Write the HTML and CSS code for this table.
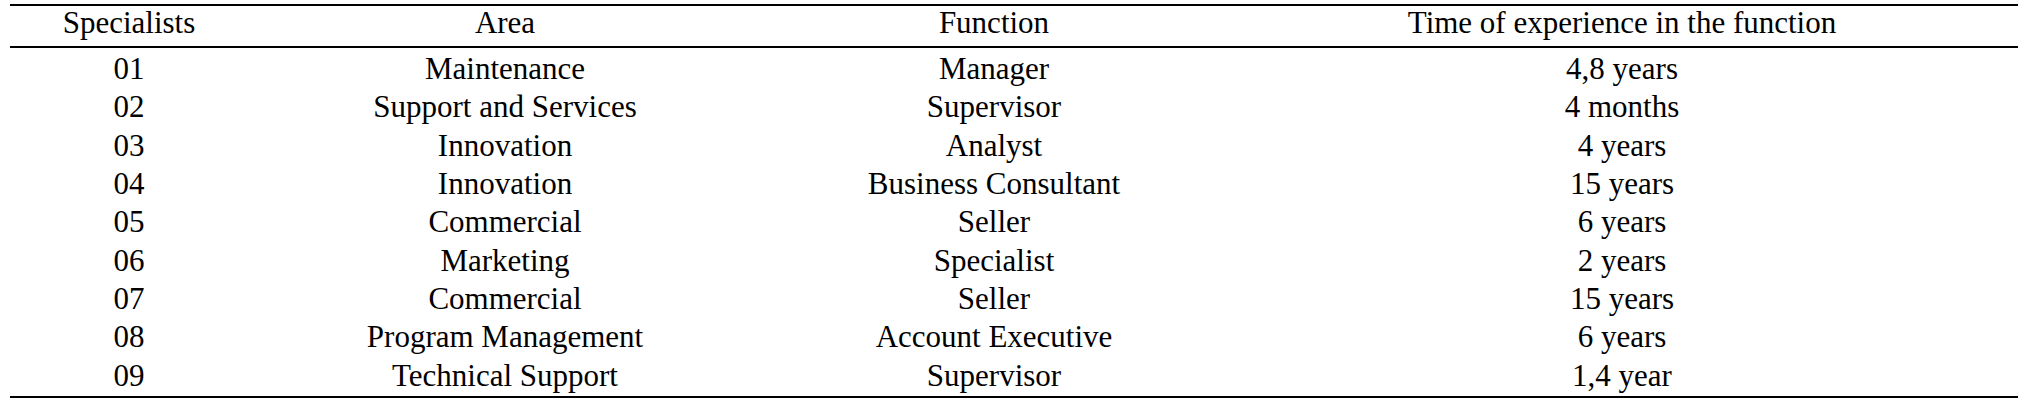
FILE: index.html
```html
<!DOCTYPE html>
<html>
<head>
<meta charset="utf-8">
<link rel="stylesheet" href="styles.css">
</head>
<body>
<table class="spec-table">
  <colgroup>
    <col class="c1"><col class="c2"><col class="c3"><col class="c4">
  </colgroup>
  <thead>
    <tr><th>Specialists</th><th>Area</th><th>Function</th><th>Time of experience in the function</th></tr>
  </thead>
  <tbody>
    <tr><td>01</td><td>Maintenance</td><td>Manager</td><td>4,8 years</td></tr>
    <tr><td>02</td><td>Support and Services</td><td>Supervisor</td><td>4 months</td></tr>
    <tr><td>03</td><td>Innovation</td><td>Analyst</td><td>4 years</td></tr>
    <tr><td>04</td><td>Innovation</td><td>Business Consultant</td><td>15 years</td></tr>
    <tr><td>05</td><td>Commercial</td><td>Seller</td><td>6 years</td></tr>
    <tr><td>06</td><td>Marketing</td><td>Specialist</td><td>2 years</td></tr>
    <tr><td>07</td><td>Commercial</td><td>Seller</td><td>15 years</td></tr>
    <tr><td>08</td><td>Program Management</td><td>Account Executive</td><td>6 years</td></tr>
    <tr class="last"><td>09</td><td>Technical Support</td><td>Supervisor</td><td>1,4 year</td></tr>
  </tbody>
</table>
</body>
</html>
```
FILE: styles.css
```css
html, body {
  margin: 0;
  padding: 0;
  background: #ffffff;
}
body {
  padding: 4px 0 0 10px;
  font-family: "Liberation Serif", "Times New Roman", serif;
  font-size: 31px;
  color: #000000;
}
.spec-table {
  border-collapse: separate;
  border-spacing: 0;
  table-layout: fixed;
  width: 2008px;
}
.c1 { width: 238px; }
.c2 { width: 514px; }
.c3 { width: 464px; }
.c4 { width: 792px; }
.spec-table th {
  font-weight: normal;
  text-align: center;
  line-height: 34px;
  padding: 0 0 6px;
  border-top: 2px solid #000;
  border-bottom: 2px solid #000;
  white-space: nowrap;
}
.spec-table td {
  text-align: center;
  line-height: 34.33px;
  padding: 4px 0 0;
  white-space: nowrap;
}
.spec-table tr.last td {
  padding-bottom: 3px;
  border-bottom: 2px solid #000;
}
```
